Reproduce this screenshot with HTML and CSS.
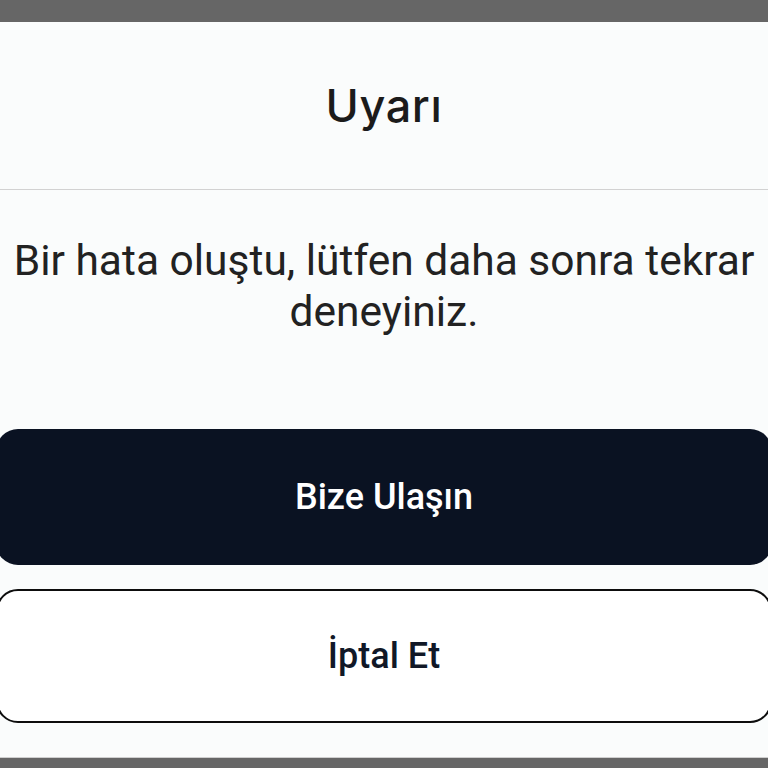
FILE: index.html
```html
<!DOCTYPE html>
<html lang="tr">
<head>
<meta charset="utf-8">
<title>Uyarı</title>
<link rel="stylesheet" href="styles.css">
</head>
<body>
<div class="screen">
  <div class="dialog">
    <header class="dialog-header">
      <h1 class="dialog-title">Uyarı</h1>
    </header>
    <p class="dialog-message">Bir hata oluştu, lütfen daha sonra tekrar deneyiniz.</p>
    <div class="dialog-actions">
      <button class="btn btn-primary" type="button">Bize Ulaşın</button>
      <button class="btn btn-outline" type="button">İptal Et</button>
    </div>
  </div>
</div>
</body>
</html>
```

FILE: styles.css
```css
* {
  box-sizing: border-box;
}

html, body {
  margin: 0;
  padding: 0;
}

body {
  background: #666666;
  font-family: Roboto, "Noto Sans", sans-serif;
}

.screen {
  width: 768px;
  height: 768px;
  overflow: hidden;
  padding-top: 22px;
  background: #666666;
}

.dialog {
  height: 736px;
  background: #fafcfc;
  border-bottom: 1px solid #cfcfcf;
  display: flex;
  flex-direction: column;
  overflow: hidden;
}

.dialog-header {
  height: 168px;
  flex: none;
  display: flex;
  align-items: center;
  justify-content: center;
  border-bottom: 1px solid #d2d2d2;
}

.dialog-title {
  margin: 0;
  font-family: Inter, sans-serif;
  font-weight: 500;
  font-size: 45px;
  letter-spacing: 0.6px;
  color: #1b1b1b;
}

.dialog-message {
  margin: 45px 0 0;
  text-align: center;
  font-size: 42.5px;
  line-height: 51px;
  color: #222222;
}

.dialog-actions {
  margin: 92px -4px 0;
  display: flex;
  flex-direction: column;
  gap: 24px;
}

.btn {
  width: 100%;
  border-radius: 22px;
  font-family: Roboto, sans-serif;
  font-weight: 500;
  font-size: 36px;
  cursor: pointer;
}

.btn-primary {
  height: 136px;
  border: none;
  background: #0a1222;
  color: #ffffff;
}

.btn-outline {
  height: 134px;
  border: 2.5px solid #0d0d0d;
  background: #ffffff;
  color: #111827;
}
```
